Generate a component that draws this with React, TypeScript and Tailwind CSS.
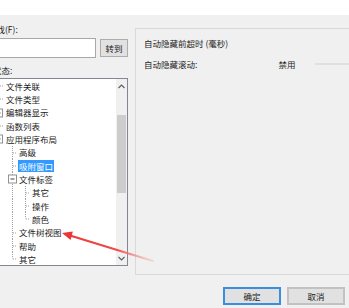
import React from "react";

type Node = {
  label: string;
  level: 1 | 2 | 3;
  box?: "plus" | "minus";
  selected?: boolean;
  // vertical continuation lines at level 2 / level 3 columns
  v2?: "full" | "half";
  v3?: "full" | "half";
};

const rows: Node[] = [
  { label: "文件关联", level: 1 },
  { label: "文件类型", level: 1 },
  { label: "编辑器显示", level: 1, box: "plus" },
  { label: "函数列表", level: 1 },
  { label: "应用程序布局", level: 1, box: "plus" },
  { label: "高级", level: 2, v2: "full" },
  { label: "吸附窗口", level: 2, v2: "full", selected: true },
  { label: "文件标签", level: 2, v2: "full", box: "minus" },
  { label: "其它", level: 3, v2: "full", v3: "full" },
  { label: "操作", level: 3, v2: "full", v3: "full" },
  { label: "颜色", level: 3, v2: "full", v3: "half" },
  { label: "文件树视图", level: 2, v2: "full" },
  { label: "帮助", level: 2, v2: "full" },
  { label: "其它", level: 2, v2: "half" },
];

const dot = "#a0a0a0";

function Connector({ n }: { n: Node }) {
  const w = (n.level - 1) * 13 + 4;
  const h = 13.33;
  const cy = 6.5;
  const lineX = n.level === 1 ? -2 : n.level === 2 ? 12 : 25;
  return (
    <svg width={w} height={h} viewBox={`0 0 ${w} ${h}`} className="shrink-0 overflow-visible">
      {n.v2 && (
        <line
          x1={12.5}
          y1={0}
          x2={12.5}
          y2={n.v2 === "half" ? cy : h}
          stroke={dot}
          strokeDasharray="1 1"
        />
      )}
      {n.v3 && (
        <line
          x1={25.5}
          y1={0}
          x2={25.5}
          y2={n.v3 === "half" ? cy : h}
          stroke={dot}
          strokeDasharray="1 1"
        />
      )}
      <line x1={Math.max(lineX + 1, 0)} y1={cy + 0.5} x2={w} y2={cy + 0.5} stroke={dot} strokeDasharray="1 1" />
      {n.box && (
        <g>
          <rect
            x={lineX - 3.5}
            y={cy - 3.5}
            width={8}
            height={8}
            fill="#fff"
            stroke="#919191"
          />
          <line x1={lineX - 1.5} y1={cy + 0.5} x2={lineX + 2.5} y2={cy + 0.5} stroke="#404040" />
          {n.box === "plus" && (
            <line x1={lineX + 0.5} y1={cy - 1.5} x2={lineX + 0.5} y2={cy + 2.5} stroke="#404040" />
          )}
        </g>
      )}
    </svg>
  );
}

function Chevron({ up }: { up?: boolean }) {
  return (
    <svg width="7" height="5" viewBox="0 0 7 5">
      <path
        d={up ? "M0.5 4 L3.5 1 L6.5 4" : "M0.5 1 L3.5 4 L6.5 1"}
        fill="none"
        stroke="#606060"
        strokeWidth="1.2"
      />
    </svg>
  );
}

export default function App() {
  return (
    <div
      className="relative w-[349px] h-[308px] overflow-hidden bg-[#f0f0f0] text-[8.5px] text-[#1a1a1a]"
      style={{ fontFamily: '"Noto Sans CJK SC", "Noto Sans", sans-serif' }}
    >
      <div className="h-[15px] bg-white" />

      <div className="flex h-[260px]">
        {/* left column */}
        <div className="flex flex-col w-[129px] ml-[-1px]">
          <div className="h-[12px] mt-[8px] leading-[12px] whitespace-nowrap ml-[-11px]">查找(F):</div>
          <div className="flex mt-[3px]">
            <div className="w-[97px] h-[20px] bg-white border border-[#a8a8a8]" />
            <button className="ml-[4px] mt-[1px] w-[28px] h-[18px] bg-[#e1e1e1] border border-[#adadad] leading-none">
              转到
            </button>
          </div>
          <div className="h-[12px] mt-[6px] leading-[12px] whitespace-nowrap ml-[-6px]">状态:</div>
          <div className="flex mt-[2px] h-[188px] bg-white border border-[#828790]">
            <div className="flex-1 flex flex-col">
              {rows.map((n, i) => (
                <div key={i} className="flex items-center h-[13.33px]">
                  <Connector n={n} />
                  <span
                    className={
                      "ml-[1px] px-[1px] leading-[12px] whitespace-nowrap " +
                      (n.selected ? "bg-[#3399ff] text-white" : "")
                    }
                  >
                    {n.label}
                  </span>
                </div>
              ))}
            </div>
            <div className="w-[11px] flex flex-col bg-[#f0f0f0]">
              <div className="h-[14px] flex items-center justify-center">
                <Chevron up />
              </div>
              <div className="h-[22px]" />
              <div className="h-[78px] mx-[1px] bg-[#cdcdcd]" />
              <div className="flex-1" />
              <div className="h-[14px] flex items-center justify-center">
                <Chevron />
              </div>
            </div>
          </div>
        </div>

        {/* right panel */}
        <div className="ml-[7px] mt-[13px] h-[247px] flex-1 border-l border-t border-b border-[#d9d9d9]">
          <div className="pl-[8px] pt-[8px] leading-[12px] whitespace-nowrap">自动隐藏前超时 (毫秒)</div>
          <div className="flex items-center pl-[8px] mt-[9px] h-[12px] whitespace-nowrap">
            <span>自动隐藏滚动:</span>
            <span className="ml-[81px]">禁用</span>
            <div className="ml-[20px] flex-1 h-[2px] bg-[#e0e0e0]" />
          </div>
        </div>
      </div>

      {/* bottom buttons */}
      <div className="flex justify-end gap-[6px] mt-[12px] pr-[4px]">
        <button className="w-[58px] h-[18px] bg-[#e1e1e1] border-2 border-[#3a8ee0] leading-none">确定</button>
        <button className="w-[58px] h-[18px] bg-[#e1e1e1] border-2 border-[#c2c2c2] leading-none">取消</button>
      </div>

      {/* annotation arrow */}
      <svg className="absolute left-0 top-0 pointer-events-none" width="349" height="308">
        <defs>
          <linearGradient id="arr" x1="62" y1="233" x2="153" y2="261" gradientUnits="userSpaceOnUse">
            <stop offset="0" stopColor="#ee3535" />
            <stop offset="0.6" stopColor="#f04a4a" />
            <stop offset="1" stopColor="#f5a0a0" stopOpacity="0.3" />
          </linearGradient>
        </defs>
        <line x1="70" y1="235.5" x2="153" y2="261" stroke="url(#arr)" strokeWidth="2" strokeLinecap="round" />
        <polygon points="62,233 72.8,231.4 70.6,240" fill="#ee3535" />
      </svg>
    </div>
  );
}
